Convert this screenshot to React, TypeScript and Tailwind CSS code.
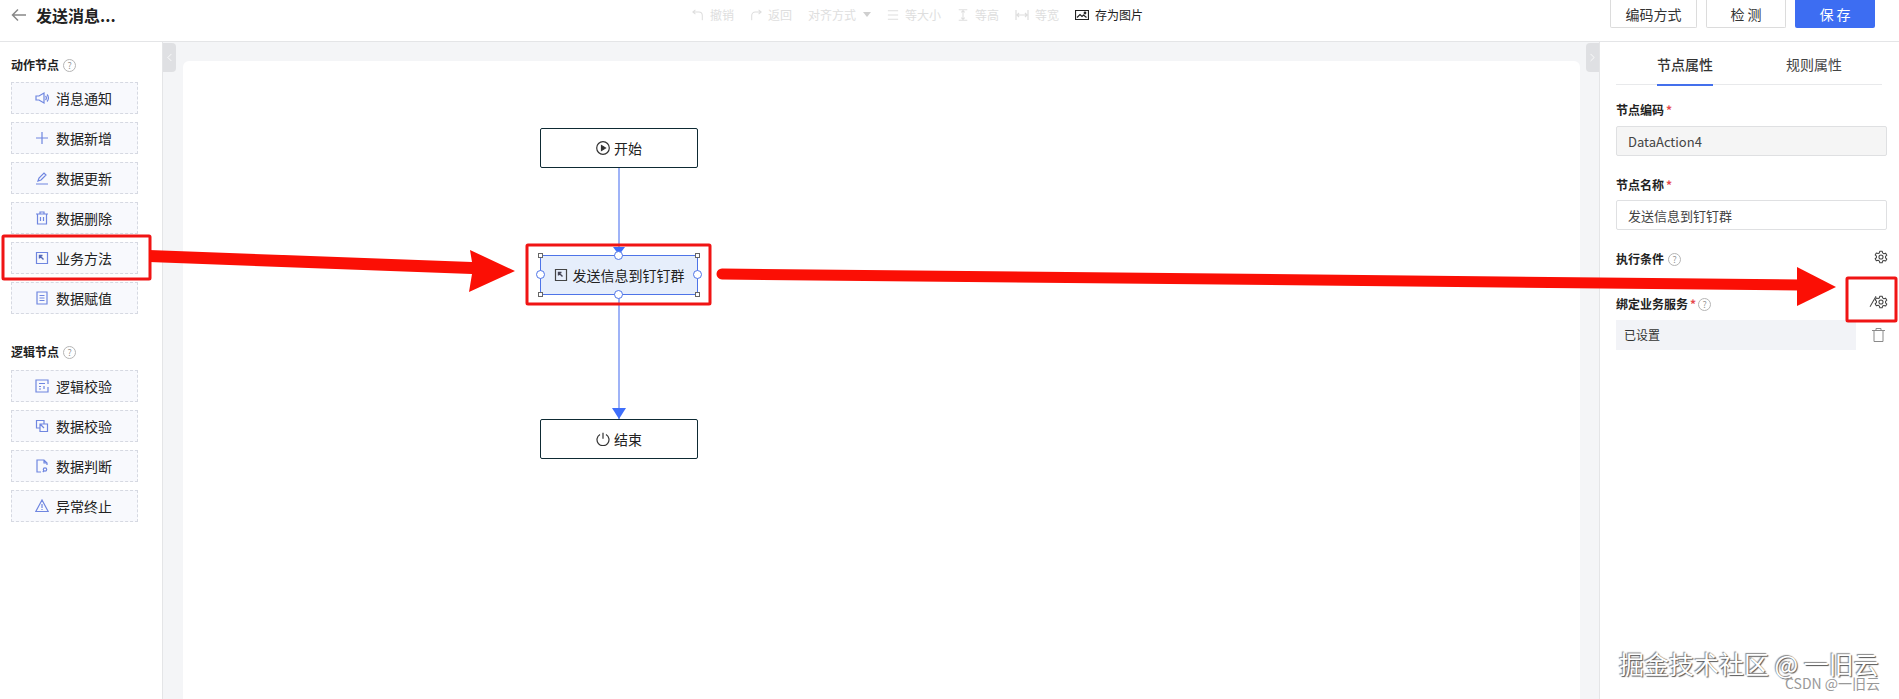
import { ChevronLeft, ChevronRight } from 'lucide-react';
import type { ReactNode } from 'react';

const font = "font-['Noto_Sans_CJK_SC','Noto_Sans',sans-serif]";

function Ico({ children, size = 14, color = '#6f86e0' }: { children: ReactNode; size?: number; color?: string }) {
  return (
    <svg width={size} height={size} viewBox="0 0 14 14" fill="none" stroke={color} strokeWidth="1.200" className="shrink-0">
      {children}
    </svg>
  );
}

const CallIcon = ({ color, arrow = '#445' }: { color?: string; arrow?: string }) => (
  <Ico color={color}>
    <path d="M1.500 1.500h11v11h-11z" />
    <path d="M4.500 4.500 8.500 8.500M4.500 7.500v-3h3" strokeWidth="1.400" stroke={arrow} />
  </Ico>
);

const actionNodes: { label: string; icon: ReactNode }[] = [
  {
    label: '消息通知',
    icon: (
      <Ico>
        <path d="M1 5h3l5-3v10L4 9H1z" />
        <path d="M10.500 5a3 3 0 0 1 0 4M12 3.500a5 5 0 0 1 0 7" />
      </Ico>
    ),
  },
  { label: '数据新增', icon: <Ico><path d="M7 1v12M1 7h12" /></Ico> },
  { label: '数据更新', icon: <Ico><path d="M1 13h12M3 10l1-3 5-5 2 2-5 5z" /></Ico> },
  { label: '数据删除', icon: <Ico><path d="M1 3h12M5 3V1h4v2M2.500 3v10h9V3M5.500 6v4M8.500 6v4" /></Ico> },
  { label: '业务方法', icon: <CallIcon color="#6f86e0" arrow="#5468b8" /> },
  { label: '数据赋值', icon: <Ico><path d="M2 1h10v12H2zM4.500 4.500h5M4.500 7h5M4.500 9.500h5" /></Ico> },
];

const logicNodes: { label: string; icon: ReactNode }[] = [
  { label: '逻辑校验', icon: <Ico><path d="M13 5V1H1v12h12V8M4 4.500h6M4 7.500h2M4 10h2M9 7v3" /></Ico> },
  { label: '数据校验', icon: <Ico><path d="M9 5V1.500H1.500V9H5M5 5h7.500v7.500H5zM5 5l4 4" /></Ico> },
  { label: '数据判断', icon: <Ico><path d="M12 6v-2L9 1H2v12h4M9 1v3h3" /><circle cx="10" cy="10.500" r="1.700" /><path d="M8.800 12l-1 1" /></Ico> },
  { label: '异常终止', icon: <Ico><path d="M7 1 .8 12.500h12.400zM7 5v4M7 10v1" /></Ico> },
];

function Help() {
  return (
    <span className="inline-flex h-[13px] w-[13px] items-center justify-center rounded-full border border-[#b5b5b5] text-[9px] font-normal leading-none text-[#999]">
      ?
    </span>
  );
}

function NodeCard({ label, icon }: { label: string; icon: ReactNode }) {
  return (
    <div className="flex h-8 w-[127px] items-center gap-[7px] border border-dashed border-[#d6d9e2] bg-[#f8f9fd] pl-[23px] text-[14px] leading-none text-[#222]">
      {icon}
      <span>{label}</span>
    </div>
  );
}

function ToolItem({ icon, label, on = false }: { icon?: ReactNode; label: string; on?: boolean }) {
  return (
    <div className={`flex items-center gap-[6px] text-[12px] leading-none ${on ? 'text-[#222]' : 'text-[#dedede]'}`}>
      {icon}
      <span>{label}</span>
    </div>
  );
}

function Handle({ className }: { className: string }) {
  return <span className={`absolute h-[5px] w-[5px] border border-[#666] bg-white ${className}`} />;
}

function Port({ className }: { className: string }) {
  return <span className={`absolute h-[9px] w-[9px] rounded-full border border-[#4e74e8] bg-white ${className}`} />;
}

function Gear() {
  return (
    <svg width="14" height="14" viewBox="0 0 24 24" fill="none" stroke="#444" strokeWidth="1.800" strokeLinejoin="round">
      <path d="M10 2h4l.7 3 2.300 1.300 3-.9 2 3.500-2.200 2.100v2.400l2.200 2.100-2 3.500-3-.9L14.700 19l-.7 3h-4l-.7-3L7 17.600l-3 .9-2-3.500L4.200 13v-2.400L2 8.500l2-3.500 3 .9L9.300 5z" />
      <circle cx="12" cy="12" r="3.500" />
    </svg>
  );
}

export default function App() {
  const gray = '#dedede';
  return (
    <div className={`relative flex h-[699px] w-[1899px] flex-col overflow-hidden bg-white ${font}`}>
      <header className="flex h-[42px] shrink-0 items-start border-b border-[#e4e5e7]">
        <div className="flex h-[29px] w-[600px] items-center">
          <svg width="16" height="14" viewBox="0 0 16 14" fill="none" stroke="#888" strokeWidth="1.500" className="ml-[11px]">
            <path d="M15 7H2M7 1.500 1.500 7 7 12.500" />
          </svg>
          <span className="ml-[9px] text-[16px] font-bold leading-none text-[#222]">发送消息...</span>
        </div>
        <div className="ml-[92px] flex h-[29px] items-center gap-4">
          <ToolItem label="撤销" icon={<Ico color={gray} size={12}><path d="M4 6 1 3.500 4 1M1 3.500h7a4 4 0 0 1 4 4V13" /></Ico>} />
          <ToolItem label="返回" icon={<Ico color={gray} size={12}><path d="M10 6l3-2.500L10 1M13 3.500H6a4 4 0 0 0-4 4V13" /></Ico>} />
          <div className="flex items-center gap-[7px] text-[12px] leading-none text-[#dedede]">
            <span>对齐方式</span>
            <span className="h-0 w-0 border-x-4 border-t-[5px] border-x-transparent border-t-[#cfcfcf]" />
          </div>
          <ToolItem label="等大小" icon={<Ico color={gray} size={12}><path d="M1 2h12M1 7h12M1 12h12" /></Ico>} />
          <ToolItem label="等高" icon={<Ico color={gray} size={12}><path d="M2 1h10M2 13h10M7 2v10M5 4l2-2 2 2M5 10l2 2 2-2" /></Ico>} />
          <ToolItem label="等宽" icon={<Ico color={gray} size={14}><path d="M1 2v10M13 2v10M2 7h10M4 5 2 7l2 2M10 5l2 2-2 2" /></Ico>} />
          <ToolItem label="存为图片" on icon={<Ico color="#222" size={14}><path d="M.500 2.500h13v9H.500z" /><path d="M2 9.500 5 6.500l2 2 1.500-1.500 3 2.500" /><circle cx="10" cy="5" r=".8" /></Ico>} />
        </div>
        <div className="ml-auto mr-6 flex items-start gap-[9px]">
          <button className="h-[28px] w-[87px] rounded-b-[2px] border border-t-0 border-[#dcdcdc] text-[14px] leading-none text-[#333]">编码方式</button>
          <button className="h-[28px] w-[80px] rounded-b-[2px] border border-t-0 border-[#dcdcdc] text-[14px] leading-none text-[#333]">检 测</button>
          <button className="h-[28px] w-[80px] rounded-b-[2px] bg-[#3d6df2] text-[14px] leading-none text-white">保 存</button>
        </div>
      </header>

      <div className="flex min-h-0 flex-1">
        <aside className="flex w-[163px] shrink-0 flex-col border-r border-[#e4e5e7] pl-[11px] pt-[15px]">
          <div className="flex h-[16px] items-center gap-1 text-[12px] font-bold leading-none text-[#222]">
            动作节点 <Help />
          </div>
          <div className="mt-[9px] flex flex-col gap-2">
            {actionNodes.map((n) => <NodeCard key={n.label} {...n} />)}
          </div>
          <div className="mt-[30px] flex h-[16px] items-center gap-1 text-[12px] font-bold leading-none text-[#222]">
            逻辑节点 <Help />
          </div>
          <div className="mt-[10px] flex flex-col gap-2">
            {logicNodes.map((n) => <NodeCard key={n.label} {...n} />)}
          </div>
        </aside>

        <main className="relative flex-1 bg-[#f4f5f7] pl-[20px] pr-[19px] pt-[19px]">
          <div className="absolute left-0 top-[1px] flex h-[29px] w-[13px] items-center justify-center rounded-r-[4px] bg-[#dfe0e3]">
            <ChevronLeft size={13} color="#fff" strokeWidth={1.500} />
          </div>
          <div className="absolute right-0 top-[1px] flex h-[29px] w-[13px] items-center justify-center rounded-l-[4px] bg-[#dfe0e3]">
            <ChevronRight size={13} color="#fff" strokeWidth={1.500} />
          </div>
          <div className="relative h-full rounded-t-[6px] bg-white">
            {/* edges */}
            <span className="absolute left-[435px] top-[106px] h-[88px] w-[2px] bg-[#9fb3f7]" />
            <span className="absolute left-[435px] top-[233px] h-[125px] w-[2px] bg-[#9fb3f7]" />
            <span className="absolute left-[430px] top-[186px] h-0 w-0 border-x-[6px] border-t-[8px] border-x-transparent border-t-[#3f6ffb]" />
            <span className="absolute left-[429px] top-[347px] h-0 w-0 border-x-[7px] border-t-[11px] border-x-transparent border-t-[#3f6ffb]" />

            <div className="absolute left-[357px] top-[67px] flex h-[40px] w-[158px] items-center justify-center gap-1 rounded-[2px] border border-[#0e2a33] bg-white text-[14px] leading-none text-[#222]">
              <Ico color="#333"><circle cx="7" cy="7" r="6.300" /><path d="M5.500 4.500v5L9.500 7z" fill="#333" /></Ico>
              开始
            </div>

            <div className="absolute left-[357px] top-[194px] flex h-[40px] w-[158px] items-center justify-center gap-[5px] border border-[#4e74e8] bg-[#e6eefb] text-[14px] leading-none text-[#222]">
              <CallIcon color="#444" />
              发送信息到钉钉群
              <Handle className="-left-[3px] -top-[3px]" />
              <Handle className="-right-[3px] -top-[3px]" />
              <Handle className="-left-[3px] -bottom-[3px]" />
              <Handle className="-right-[3px] -bottom-[3px]" />
              <Port className="left-[73px] -top-[5px]" />
              <Port className="left-[73px] -bottom-[5px]" />
              <Port className="-left-[5px] top-[14px]" />
              <Port className="-right-[5px] top-[14px]" />
            </div>

            <div className="absolute left-[357px] top-[358px] flex h-[40px] w-[158px] items-center justify-center gap-1 rounded-[2px] border border-[#0e2a33] bg-white text-[14px] leading-none text-[#222]">
              <Ico color="#333"><path d="M7 .8v6M4 2.500a6 6 0 1 0 6 0" /></Ico>
              结束
            </div>
          </div>
        </main>

        <aside className="flex w-[300px] shrink-0 flex-col border-l border-[#e4e5e7] pl-[16px] pr-[12px]">
          <div className="flex h-[43px] w-[266px] border-b border-[#e8e9eb] text-[14px] leading-none">
            <div className="relative ml-[41px] flex h-[43px] w-14 items-center justify-center font-medium text-[#333]">
              节点属性
              <span className="absolute bottom-[-1px] left-0 h-[2px] w-full bg-[#4470ec]" />
            </div>
            <div className="ml-[73px] flex h-[43px] w-14 items-center justify-center text-[#444]">规则属性</div>
          </div>

          <div className="mt-[16px] flex h-[18px] items-center text-[12px] font-bold leading-none text-[#222]">
            节点编码<span className="ml-[2px] text-[#e5484d]">*</span>
          </div>
          <div className="mt-[7px] flex h-[30px] items-center rounded-[2px] border border-[#dfe0e2] bg-[#f5f5f5] pl-[11px] text-[13px] leading-none text-[#444]">
            DataAction4
          </div>

          <div className="mt-[20px] flex h-[18px] items-center text-[12px] font-bold leading-none text-[#222]">
            节点名称<span className="ml-[2px] text-[#e5484d]">*</span>
          </div>
          <div className="mt-[6px] flex h-[30px] items-center rounded-[2px] border border-[#dfe0e2] pl-[11px] text-[13px] leading-none text-[#444]">
            发送信息到钉钉群
          </div>

          <div className="mt-[20px] flex h-[18px] items-center justify-between text-[12px] font-bold leading-none text-[#222]">
            <span className="flex items-center gap-1">执行条件 <Help /></span>
            <span className="-mt-[4px] mr-[-1px]"><Gear /></span>
          </div>

          <div className="mt-[27px] flex h-[18px] items-center justify-between text-[12px] font-bold leading-none text-[#222]">
            <span className="flex items-center">绑定业务服务<span className="mx-[2px] text-[#e5484d]">*</span><Help /></span>
            <span className="relative -mt-[5px] mr-[-1px]">
              <Gear />
              <span className="absolute -left-[7px] top-[6px] h-[1px] w-[12px] -rotate-[60deg] bg-[#444]" />
            </span>
          </div>
          <div className="mt-[7px] flex w-full items-center justify-between">
            <div className="flex h-[30px] w-[240px] items-center bg-[#f2f3f7] pl-2 text-[12px] leading-none text-[#333]">已设置</div>
            <svg width="13" height="14" viewBox="0 0 13 14" fill="none" stroke="#8a8a8a" className="mr-[2px]">
              <path d="M0 2.500h13M4 2.500v-2h5v2M2 2.500v11h9v-11" />
            </svg>
          </div>
        </aside>
      </div>

      {/* annotation layer drawn on top of the screenshot */}
      <svg className="pointer-events-none absolute inset-0" width="1899" height="699" fill="none">
        <rect x="3" y="236" width="147" height="43" stroke="#f01414" strokeWidth="3" rx="1" />
        <rect x="527" y="245" width="183" height="59" stroke="#f01414" strokeWidth="3" rx="1" />
        <rect x="1847" y="278" width="49" height="43" stroke="#f01414" strokeWidth="3" rx="1" />
        <polygon points="149,250 472,262 470,250 515,271 469,292 472,274 149,262" fill="#fb0f05" />
        <path d="M722 274 1800 285" stroke="#fb0f05" strokeWidth="11" strokeLinecap="round" />
        <polygon points="1797,267 1836,287 1797,306" fill="#fb0f05" />
      </svg>

      <div className="absolute left-[1619px] top-[647px] text-[25px] leading-[32px] text-white [text-shadow:1px_1px_1px_#555,-1px_-1px_1px_#888]">
        掘金技术社区 @ 一旧云
      </div>
      <div className="absolute left-[1785px] top-[675px] text-[14px] leading-[16px] text-[#999]">CSDN @一旧云</div>
    </div>
  );
}
